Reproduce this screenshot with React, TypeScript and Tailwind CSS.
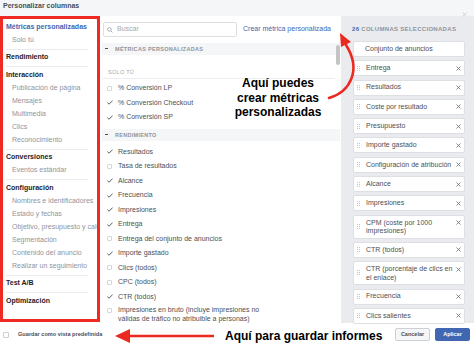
import React from "react";

const groups: { title: string; blue?: boolean; items: string[] }[] = [
  { title: "Métricas personalizadas", blue: true, items: ["Solo tú"] },
  { title: "Rendimiento", items: [] },
  {
    title: "Interacción",
    items: ["Publicación de página", "Mensajes", "Multimedia", "Clics", "Reconocimiento"],
  },
  { title: "Conversiones", items: ["Eventos estándar"] },
  {
    title: "Configuración",
    items: [
      "Nombres e identificadores",
      "Estado y fechas",
      "Objetivo, presupuesto y calendario",
      "Segmentación",
      "Contenido del anuncio",
      "Realizar un seguimiento",
    ],
  },
  { title: "Test A/B", items: [] },
  { title: "Optimización", items: [] },
];

const soloRows: [string, boolean][] = [
  ["% Conversión LP", false],
  ["% Conversión Checkout", true],
  ["% Conversión SP", true],
];

const rendRows: [string, boolean][] = [
  ["Resultados", true],
  ["Tasa de resultados", false],
  ["Alcance", true],
  ["Frecuencia", true],
  ["Impresiones", true],
  ["Entrega", true],
  ["Entrega del conjunto de anuncios", false],
  ["Importe gastado", true],
  ["Clics (todos)", false],
  ["CPC (todos)", false],
  ["CTR (todos)", true],
];

const cards: string[][] = [
  ["Entrega"],
  ["Resultados"],
  ["Coste por resultado"],
  ["Presupuesto"],
  ["Importe gastado"],
  ["Configuración de atribución"],
  ["Alcance"],
  ["Impresiones"],
  ["CPM (coste por 1000", "impresiones)"],
  ["CTR (todos)"],
  ["CTR (porcentaje de clics en", "el enlace)"],
  ["Frecuencia"],
  ["Clics salientes"],
];

function Check({ on }: { on: boolean }) {
  if (on)
    return (
      <svg width="6" height="5" viewBox="0 0 6 5" className="shrink-0">
        <path d="M0.4 2.6 L2.1 4.2 L5.6 0.6" fill="none" stroke="#4b4f56" strokeWidth="0.9" />
      </svg>
    );
  return <div className="w-[5px] h-[5px] border border-[#d4d7dc] rounded-[1px] shrink-0" />;
}

function Row({ label, on }: { label: string; on: boolean }) {
  return (
    <div className="h-[14.5px] flex items-center pl-[5px]">
      <div className="w-[6px] flex items-center">
        <Check on={on} />
      </div>
      <span className="ml-[5px] text-[7px] leading-[8px] text-[#4b4f56] whitespace-nowrap">{label}</span>
    </div>
  );
}

function SectionBar({ label, h }: { label: string; h: string }) {
  return (
    <div className={`${h} bg-[#f5f6f7] flex items-center pl-[3px]`}>
      <div className="w-[3px] h-[1px] bg-[#4b4f56]" />
      <span className="ml-[7px] text-[5.5px] font-bold tracking-[0.3px] text-[#90949c] uppercase">{label}</span>
    </div>
  );
}

function Handle() {
  return (
    <div className="grid grid-cols-2 gap-x-[1px] gap-y-[1px] w-[3px]">
      {[0, 1, 2, 3, 4, 5].map((i) => (
        <div key={i} className="w-[1px] h-[1px] bg-[#bec3c9]" />
      ))}
    </div>
  );
}

export default function App() {
  return (
    <div
      className="relative w-[474px] h-[346px] overflow-hidden bg-white"
      style={{ fontFamily: '"Liberation Sans", Arial, sans-serif' }}
    >
      {/* header */}
      <div className="h-[16px] bg-[#f5f6f7] pl-[3px] pt-[2px] text-[7px] leading-[8px] font-bold text-[#4b4f56]">
        Personalizar columnas
      </div>

      <div className="flex h-[307px]">
        {/* sidebar */}
        <div className="w-[100px] h-[306px] border-[3px] border-[#ee2a22] bg-white overflow-hidden pt-[1.5px] shrink-0">
          {groups.map((g, gi) => (
            <div key={g.title} className={`${gi > 0 ? "pt-[1.5px]" : ""}`}>
              <div
                className={`h-[13px] flex items-center pl-[3px] text-[7px] font-bold whitespace-nowrap ${
                  g.blue ? "text-[#4267b2]" : "text-[#1d2129]"
                }`}
              >
                {g.title}
              </div>
              {g.items.map((it) => (
                <div
                  key={it}
                  className="h-[13px] flex items-center pl-[9px] text-[7px] text-[#90949c] whitespace-nowrap"
                >
                  {it}
                </div>
              ))}
              {gi < groups.length - 1 && <div className="mt-[2px] ml-[3px] mr-[9px] h-[1px] bg-[#e9ebee]" />}
            </div>
          ))}
        </div>

        {/* middle */}
        <div className="relative w-[241px] h-[307px] overflow-hidden pl-[2px] pr-[1px]">
          <div className="pt-[6px] flex items-center h-[21px] pl-[1px]">
            <div className="w-[134px] h-[15px] border border-[#dddfe2] rounded-[2px] flex items-center pl-[3px]">
              <svg width="6" height="6" viewBox="0 0 10 10">
                <circle cx="4" cy="4" r="3" fill="none" stroke="#90949c" strokeWidth="1.2" />
                <path d="M6.2 6.2 L9 9" stroke="#90949c" strokeWidth="1.3" />
              </svg>
              <span className="ml-[4px] text-[7px] text-[#a5a9af]">Buscar</span>
            </div>
            <span className="ml-[6px] text-[7px] text-[#4267b2] whitespace-nowrap">Crear métrica personalizada</span>
          </div>
          <div className="h-[5.5px]" />
          <SectionBar label="Métricas personalizadas" h="h-[12.5px]" />
          <div className="pt-[14px] pl-[6px] h-[21px] text-[5.5px] leading-[7px] tracking-[0.3px] text-[#a5a9af]">
            SOLO TÚ
          </div>
          <div className="mt-[2px] mr-[5px] h-[1px] bg-[#eceef1]" />
          <div className="h-[2px]" />
          {soloRows.map(([l, on]) => (
            <div key={l} className="h-[14.4px]">
              <Row label={l} on={on} />
            </div>
          ))}
          <div className="h-[5px]" />
          <SectionBar label="Rendimiento" h="h-[11.5px]" />
          <div className="h-[4px]" />
          {rendRows.map(([l, on]) => (
            <Row key={l} label={l} on={on} />
          ))}
          <div className="flex pl-[5px] pt-[2px]">
            <div className="w-[6px] pt-[1.5px]">
              <Check on={false} />
            </div>
            <div className="ml-[5px] text-[7px] leading-[8.5px] text-[#4b4f56] whitespace-nowrap">
              Impresiones en bruto (incluye impresiones no
              <br />
              válidas de tráfico no atribuible a personas)
            </div>
          </div>
          {/* scrollbar thumb */}
          <div className="absolute left-[236px] top-[29px] w-[4px] h-[20px] rounded-[2px] bg-[#c4c4c4]" />
        </div>

        {/* right panel */}
        <div className="flex-1 bg-[#e9ebee] pt-[10px] pl-[12px] pr-[9px]">
          <div className="h-[7px] leading-[7px] text-[6px] font-bold tracking-[0.3px] text-[#90949c] whitespace-nowrap -ml-[1px]">
            <span className="text-[#4267b2]">26</span> COLUMNAS SELECCIONADAS
          </div>
          <div className="mt-[8px] flex flex-col gap-[3.3px]">
            <div className="h-[16px] bg-white border border-[#dddfe2] rounded-[2px] flex items-center pl-[11px] text-[7px] text-[#4b4f56] whitespace-nowrap">
              Conjunto de anuncios
            </div>
            {cards.map((c) => (
              <div
                key={c.join(" ")}
                className={`bg-white border border-[#dddfe2] rounded-[2px] flex pl-[3px] pr-[2px] ${
                  c.length > 1 ? "h-[24px] items-start pt-[3px]" : "h-[16px] items-center"
                }`}
              >
                <div className={c.length > 1 ? "pt-[5px]" : ""}>
                  <Handle />
                </div>
                <div className="ml-[6px] flex-1 text-[7px] leading-[8.5px] text-[#4b4f56] whitespace-nowrap">
                  {c.map((line, i) => (
                    <div key={i}>{line}</div>
                  ))}
                </div>
                <svg
                  width="5"
                  height="5"
                  viewBox="0 0 5 5"
                  className={`shrink-0 mr-[1px] ${c.length > 1 ? "mt-[1.5px]" : ""}`}
                >
                  <path d="M0.5 0.5 L4.5 4.5 M4.5 0.5 L0.5 4.5" stroke="#606770" strokeWidth="0.8" />
                </svg>
              </div>
            ))}
          </div>
        </div>
      </div>

      {/* footer */}
      <div className="h-[23px] flex items-center bg-white pl-[3px] pr-[4px]">
        <div className="w-[6px] h-[6px] border border-[#ccd0d5] rounded-[1px]" />
        <span className="ml-[9px] text-[5.6px] font-bold text-[#4b4f56] whitespace-nowrap">
          Guardar como vista predefinida
        </span>
        <div className="ml-auto flex gap-[5px]">
          <div className="w-[35px] h-[13px] bg-[#f5f6f7] border border-[#ccd0d5] rounded-[2px] flex items-center justify-center text-[5.5px] font-bold text-[#4b4f56]">
            Cancelar
          </div>
          <div className="w-[35px] h-[13px] bg-[#4267b2] border border-[#4267b2] rounded-[2px] flex items-center justify-center text-[5.5px] font-bold text-white">
            Aplicar
          </div>
        </div>
      </div>

      {/* close icon */}
      <svg width="5" height="5" viewBox="0 0 5 5" className="absolute left-[462px] top-[12px]">
        <path d="M0.5 0.5 L4.5 4.5 M4.5 0.5 L0.5 4.5" stroke="#bec3c9" strokeWidth="0.7" />
      </svg>

      {/* annotations */}
      <div className="absolute left-[228px] top-[76px] w-[100px] text-center text-[12px] leading-[14.5px] font-bold text-black">
        Aquí puedes
        <br />
        crear métricas
        <br />
        personalizadas
      </div>
      <div className="absolute left-[225px] top-[328px] text-[12px] leading-[16px] font-bold text-black whitespace-nowrap">
        Aquí para guardar informes
      </div>
      <svg className="absolute left-0 top-0 pointer-events-none" width="474" height="346" viewBox="0 0 474 346">
        <path d="M329 98 C350 92 362 70 346 45" fill="none" stroke="#ea2a20" strokeWidth="2.6" strokeLinecap="round" />
        <polygon points="340,33 351,42 341,47" fill="#ea2a20" />
        <line x1="126" y1="336" x2="214" y2="336" stroke="#ea2a20" strokeWidth="2.7" />
        <polygon points="115,336 130,329 130,343" fill="#ea2a20" />
      </svg>
    </div>
  );
}
